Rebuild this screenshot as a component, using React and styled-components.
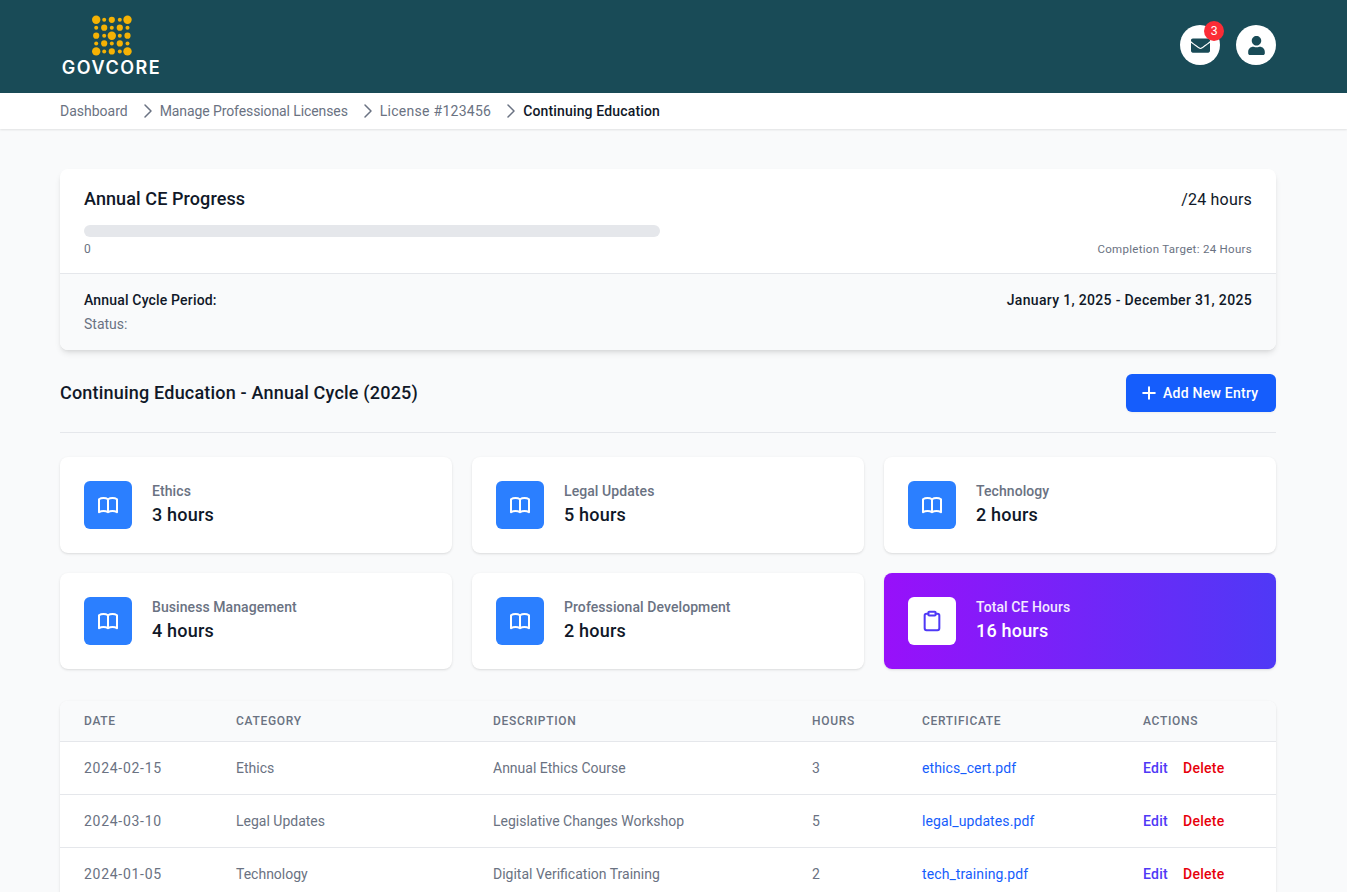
import React from "react";
import styled, { createGlobalStyle } from "styled-components";
import { FaEnvelope, FaUser } from "react-icons/fa";
import { HiOutlineBookOpen } from "react-icons/hi";
import { ChevronRight, Plus, Clipboard } from "lucide-react";

const Global = createGlobalStyle`
  html, body { margin: 0; padding: 0; background: #f9fafb; }
  body { font-family: "Roboto", "Liberation Sans", sans-serif; color: #101828; height: 892px; overflow: hidden; }
  * { box-sizing: border-box; }
`;

const Header = styled.header`
  height: 93px;
  background: #194b57;
  padding: 0 71px 0 60px;
  display: flex;
  align-items: center;
  justify-content: space-between;
`;
const Logo = styled.div`
  display: flex;
  flex-direction: column;
  align-items: center;
  gap: 1px;
  width: 103px;
`;
const LogoText = styled.span`
  font-family: "Inter", sans-serif;
  font-size: 18px;
  line-height: 22px;
  font-weight: 600;
  letter-spacing: 1.5px;
  color: #fff;
`;
const HeaderActions = styled.div`
  display: flex;
  gap: 16px;
  margin-bottom: 3px;
`;
const RoundButton = styled.button`
  position: relative;
  width: 40px;
  height: 40px;
  padding: 0;
  border: 0;
  border-radius: 50%;
  background: #fff;
  color: #194b57;
  display: flex;
  align-items: center;
  justify-content: center;
`;
const Badge = styled.span`
  position: absolute;
  top: -4px;
  right: -4px;
  width: 20px;
  height: 20px;
  border-radius: 50%;
  background: #fb2c36;
  color: #fff;
  font-size: 12px;
  line-height: 20px;
  text-align: center;
`;
const Breadcrumb = styled.nav`
  height: 36px;
  padding: 0 60px;
  background: #fff;
  display: flex;
  align-items: center;
  box-shadow: 0 1px 2px rgba(0, 0, 0, 0.1);
  font-size: 14px;
  color: #6a7282;
`;
const Crumb = styled.span`
  letter-spacing: ${p => p.$ls || 0}px;
  font-weight: ${p => (p.$current ? 500 : 400)};
  color: ${p => (p.$current ? "#101828" : "#6a7282")};
`;
const CrumbIcon = styled(ChevronRight)`
  margin-left: 8px;
  flex: none;
  stroke-width: 1.5;
`;
const Main = styled.main`
  width: 1216px;
  margin: 40px 0 0 60px;
`;
const ProgressCard = styled.section`
  background: #fff;
  border-radius: 8px;
  overflow: hidden;
  box-shadow: 0 4px 6px -1px rgba(0, 0, 0, 0.1), 0 2px 4px -2px rgba(0, 0, 0, 0.1);
`;
const ProgressTop = styled.div`
  padding: 16px 24px;
  border-bottom: 1px solid #e5e7eb;
`;
const ProgressHead = styled.div`
  display: flex;
  justify-content: space-between;
  align-items: center;
  height: 28px;
`;
const ProgressTitle = styled.h2`
  margin: 0;
  font-size: 18px;
  line-height: 28px;
  font-weight: 500;
  letter-spacing: 0.1px;
`;
const ProgressHours = styled.span`
  margin-top: 2px;
  font-size: 16px;
  line-height: 28px;
  letter-spacing: 0.2px;
`;
const Track = styled.div`
  width: 576px;
  height: 12px;
  margin-top: 12px;
  border-radius: 999px;
  background: #e5e7eb;
`;
const Scale = styled.div`
  display: flex;
  justify-content: space-between;
  margin-top: 4px;
  font-size: 12px;
  line-height: 16px;
  color: #6a7282;
`;
const ScaleRight = styled.span`
  font-size: 11.5px;
  letter-spacing: 0.3px;
`;
const ProgressFoot = styled.div`
  padding: 16px 24px;
  background: #f9fafb;
  display: flex;
  flex-direction: column;
  gap: 4px;
`;
const FootRow = styled.div`
  display: flex;
  justify-content: space-between;
  font-size: 14px;
  line-height: 20px;
`;
const FootLabel = styled.span`
  font-weight: 500;
  letter-spacing: 0.17px;
`;
const FootValue = styled.span`
  font-weight: 500;
  letter-spacing: 0.33px;
`;
const FootMuted = styled.span`
  color: #6a7282;
`;
const SectionHead = styled.div`
  margin-top: 24px;
  padding-bottom: 20px;
  border-bottom: 1px solid #e5e7eb;
  display: flex;
  align-items: center;
  justify-content: space-between;
`;
const SectionTitle = styled.h2`
  margin: 0;
  font-size: 18px;
  line-height: 28px;
  font-weight: 500;
  letter-spacing: 0.2px;
`;
const AddButton = styled.button`
  width: 150px;
  height: 38px;
  padding: 0 0 0 13px;
  border: 0;
  border-radius: 6px;
  background: #155dfc;
  color: #fff;
  font: 500 14px "Roboto", sans-serif;
  letter-spacing: 0.25px;
  display: flex;
  align-items: center;
  gap: 4px;
  box-shadow: 0 1px 2px rgba(0, 0, 0, 0.05);
`;
const StatGrid = styled.div`
  display: grid;
  grid-template-columns: repeat(3, 392px);
  gap: 20px;
  margin-top: 24px;
`;
const StatCard = styled.div`
  height: 96px;
  padding: 24px;
  border-radius: 8px;
  display: flex;
  align-items: center;
  gap: 20px;
  background: ${p => (p.$total ? "linear-gradient(to right, #9810fa, #4f39f6)" : "#fff")};
  box-shadow: 0 1px 3px rgba(0, 0, 0, 0.1), 0 1px 2px -1px rgba(0, 0, 0, 0.1);
`;
const StatIcon = styled.div`
  width: 48px;
  height: 48px;
  flex: none;
  border-radius: 6px;
  display: flex;
  align-items: center;
  justify-content: center;
  background: ${p => (p.$total ? "#fff" : "#2b7fff")};
  color: ${p => (p.$total ? "#4f39f6" : "#fff")};
`;
const StatBody = styled.div`
  display: flex;
  flex-direction: column;
`;
const StatLabel = styled.span`
  font-size: 14px;
  line-height: 20px;
  font-weight: 500;
  letter-spacing: 0.08px;
  color: ${p => (p.$total ? "#f3e8ff" : "#6a7282")};
`;
const StatValue = styled.span`
  font-size: 18px;
  line-height: 28px;
  font-weight: 500;
  letter-spacing: 0.2px;
  color: ${p => (p.$total ? "#fff" : "#101828")};
`;
const TableCard = styled.div`
  margin-top: 32px;
  border-radius: 8px 8px 0 0;
  overflow: hidden;
  background: #fff;
  box-shadow: 0 1px 3px rgba(0, 0, 0, 0.1), 0 1px 2px -1px rgba(0, 0, 0, 0.1);
`;
const Table = styled.table`
  width: 100%;
  border-collapse: collapse;
  table-layout: fixed;
`;
const Th = styled.th`
  height: 40px;
  padding: 0 24px;
  background: #f9fafb;
  border-bottom: 1px solid #e5e7eb;
  text-align: left;
  font-size: 12px;
  font-weight: 500;
  letter-spacing: 0.7px;
  text-transform: uppercase;
  color: #6a7282;
`;
const Td = styled.td`
  height: 53px;
  padding: 0 24px;
  border-bottom: 1px solid #e5e7eb;
  font-size: 14px;
  color: #6a7282;
  white-space: nowrap;
`;
const DateCell = styled(Td)`
  letter-spacing: 0.72px;
`;
const FileLink = styled.a`
  color: #155dfc;
  text-decoration: none;
  letter-spacing: 0.1px;
`;
const ActionLink = styled.a`
  font-weight: 500;
  letter-spacing: 0.28px;
  color: ${p => (p.$danger ? "#e7000b" : "#4f39f6")};
  margin-right: ${p => (p.$danger ? 0 : 15)}px;
`;

const LogoMark = () => {
  const xs = [6.2, 14.2, 21.8, 29.8, 37.5];
  const ys = [4.8, 12.7, 20.7, 28.4, 36.4];
  const big = 4.2, med = 3.1, small = 2;
  const rows = [
    [big, small, med, small, big],
    [small, med, small, med, small],
    [med, small, big, small, med],
    [small, med, small, med, small],
    [big, small, med, small, big],
  ];
  return (
    <svg width="44" height="41" viewBox="0 0 44 41" aria-hidden="true">
      {rows.flatMap((row, j) =>
        row.map((r, i) => <circle key={`${i}-${j}`} cx={xs[i]} cy={ys[j]} r={r} fill="#f5b204" />)
      )}
    </svg>
  );
};

const stats = [
  ["Ethics", "3 hours"],
  ["Legal Updates", "5 hours"],
  ["Technology", "2 hours"],
  ["Business Management", "4 hours"],
  ["Professional Development", "2 hours"],
];
const crumbs = [
  ["Dashboard", 0],
  ["Manage Professional Licenses", -0.1],
  ["License #123456", 0.27],
];
const rows = [
  ["2024-02-15", "Ethics", "Annual Ethics Course", "3", "ethics_cert.pdf"],
  ["2024-03-10", "Legal Updates", "Legislative Changes Workshop", "5", "legal_updates.pdf"],
  ["2024-01-05", "Technology", "Digital Verification Training", "2", "tech_training.pdf"],
];
const cols = [152, 257, 319, 110, 221, 157];
const heads = ["Date", "Category", "Description", "Hours", "Certificate", "Actions"];

export default function App() {
  return (
    <>
      <Global />
      <Header>
        <Logo>
          <LogoMark />
          <LogoText>GOVCORE</LogoText>
        </Logo>
        <HeaderActions>
          <RoundButton aria-label="Messages">
            <FaEnvelope size={19} />
            <Badge>3</Badge>
          </RoundButton>
          <RoundButton aria-label="Profile">
            <FaUser size={19} />
          </RoundButton>
        </HeaderActions>
      </Header>
      <Breadcrumb>
        {crumbs.map(([c, ls]) => (
          <React.Fragment key={c}>
            <Crumb $ls={ls}>{c}</Crumb>
            <CrumbIcon size={24} />
          </React.Fragment>
        ))}
        <Crumb $current $ls={0.15}>Continuing Education</Crumb>
      </Breadcrumb>
      <Main>
        <ProgressCard>
          <ProgressTop>
            <ProgressHead>
              <ProgressTitle>Annual CE Progress</ProgressTitle>
              <ProgressHours>/24 hours</ProgressHours>
            </ProgressHead>
            <Track />
            <Scale>
              <span>0</span>
              <ScaleRight>Completion Target: 24 Hours</ScaleRight>
            </Scale>
          </ProgressTop>
          <ProgressFoot>
            <FootRow>
              <FootLabel>Annual Cycle Period:</FootLabel>
              <FootValue>January 1, 2025 - December 31, 2025</FootValue>
            </FootRow>
            <FootRow>
              <FootMuted>Status:</FootMuted>
            </FootRow>
          </ProgressFoot>
        </ProgressCard>
        <SectionHead>
          <SectionTitle>Continuing Education - Annual Cycle (2025)</SectionTitle>
          <AddButton>
            <Plus size={20} strokeWidth={2.4} />
            Add New Entry
          </AddButton>
        </SectionHead>
        <StatGrid>
          {stats.map(([label, value]) => (
            <StatCard key={label}>
              <StatIcon>
                <HiOutlineBookOpen size={24} />
              </StatIcon>
              <StatBody>
                <StatLabel>{label}</StatLabel>
                <StatValue>{value}</StatValue>
              </StatBody>
            </StatCard>
          ))}
          <StatCard $total>
            <StatIcon $total>
              <Clipboard size={22} strokeWidth={2.2} />
            </StatIcon>
            <StatBody>
              <StatLabel $total>Total CE Hours</StatLabel>
              <StatValue $total>16 hours</StatValue>
            </StatBody>
          </StatCard>
        </StatGrid>
        <TableCard>
          <Table>
            <colgroup>
              {cols.map((w, i) => <col key={i} width={w} />)}
            </colgroup>
            <thead>
              <tr>{heads.map(h => <Th key={h}>{h}</Th>)}</tr>
            </thead>
            <tbody>
              {rows.map(r => (
                <tr key={r[0]}>
                  <DateCell>{r[0]}</DateCell>
                  <Td>{r[1]}</Td>
                  <Td>{r[2]}</Td>
                  <Td>{r[3]}</Td>
                  <Td><FileLink href="#">{r[4]}</FileLink></Td>
                  <Td>
                    <ActionLink>Edit</ActionLink>
                    <ActionLink $danger>Delete</ActionLink>
                  </Td>
                </tr>
              ))}
            </tbody>
          </Table>
        </TableCard>
      </Main>
    </>
  );
}
